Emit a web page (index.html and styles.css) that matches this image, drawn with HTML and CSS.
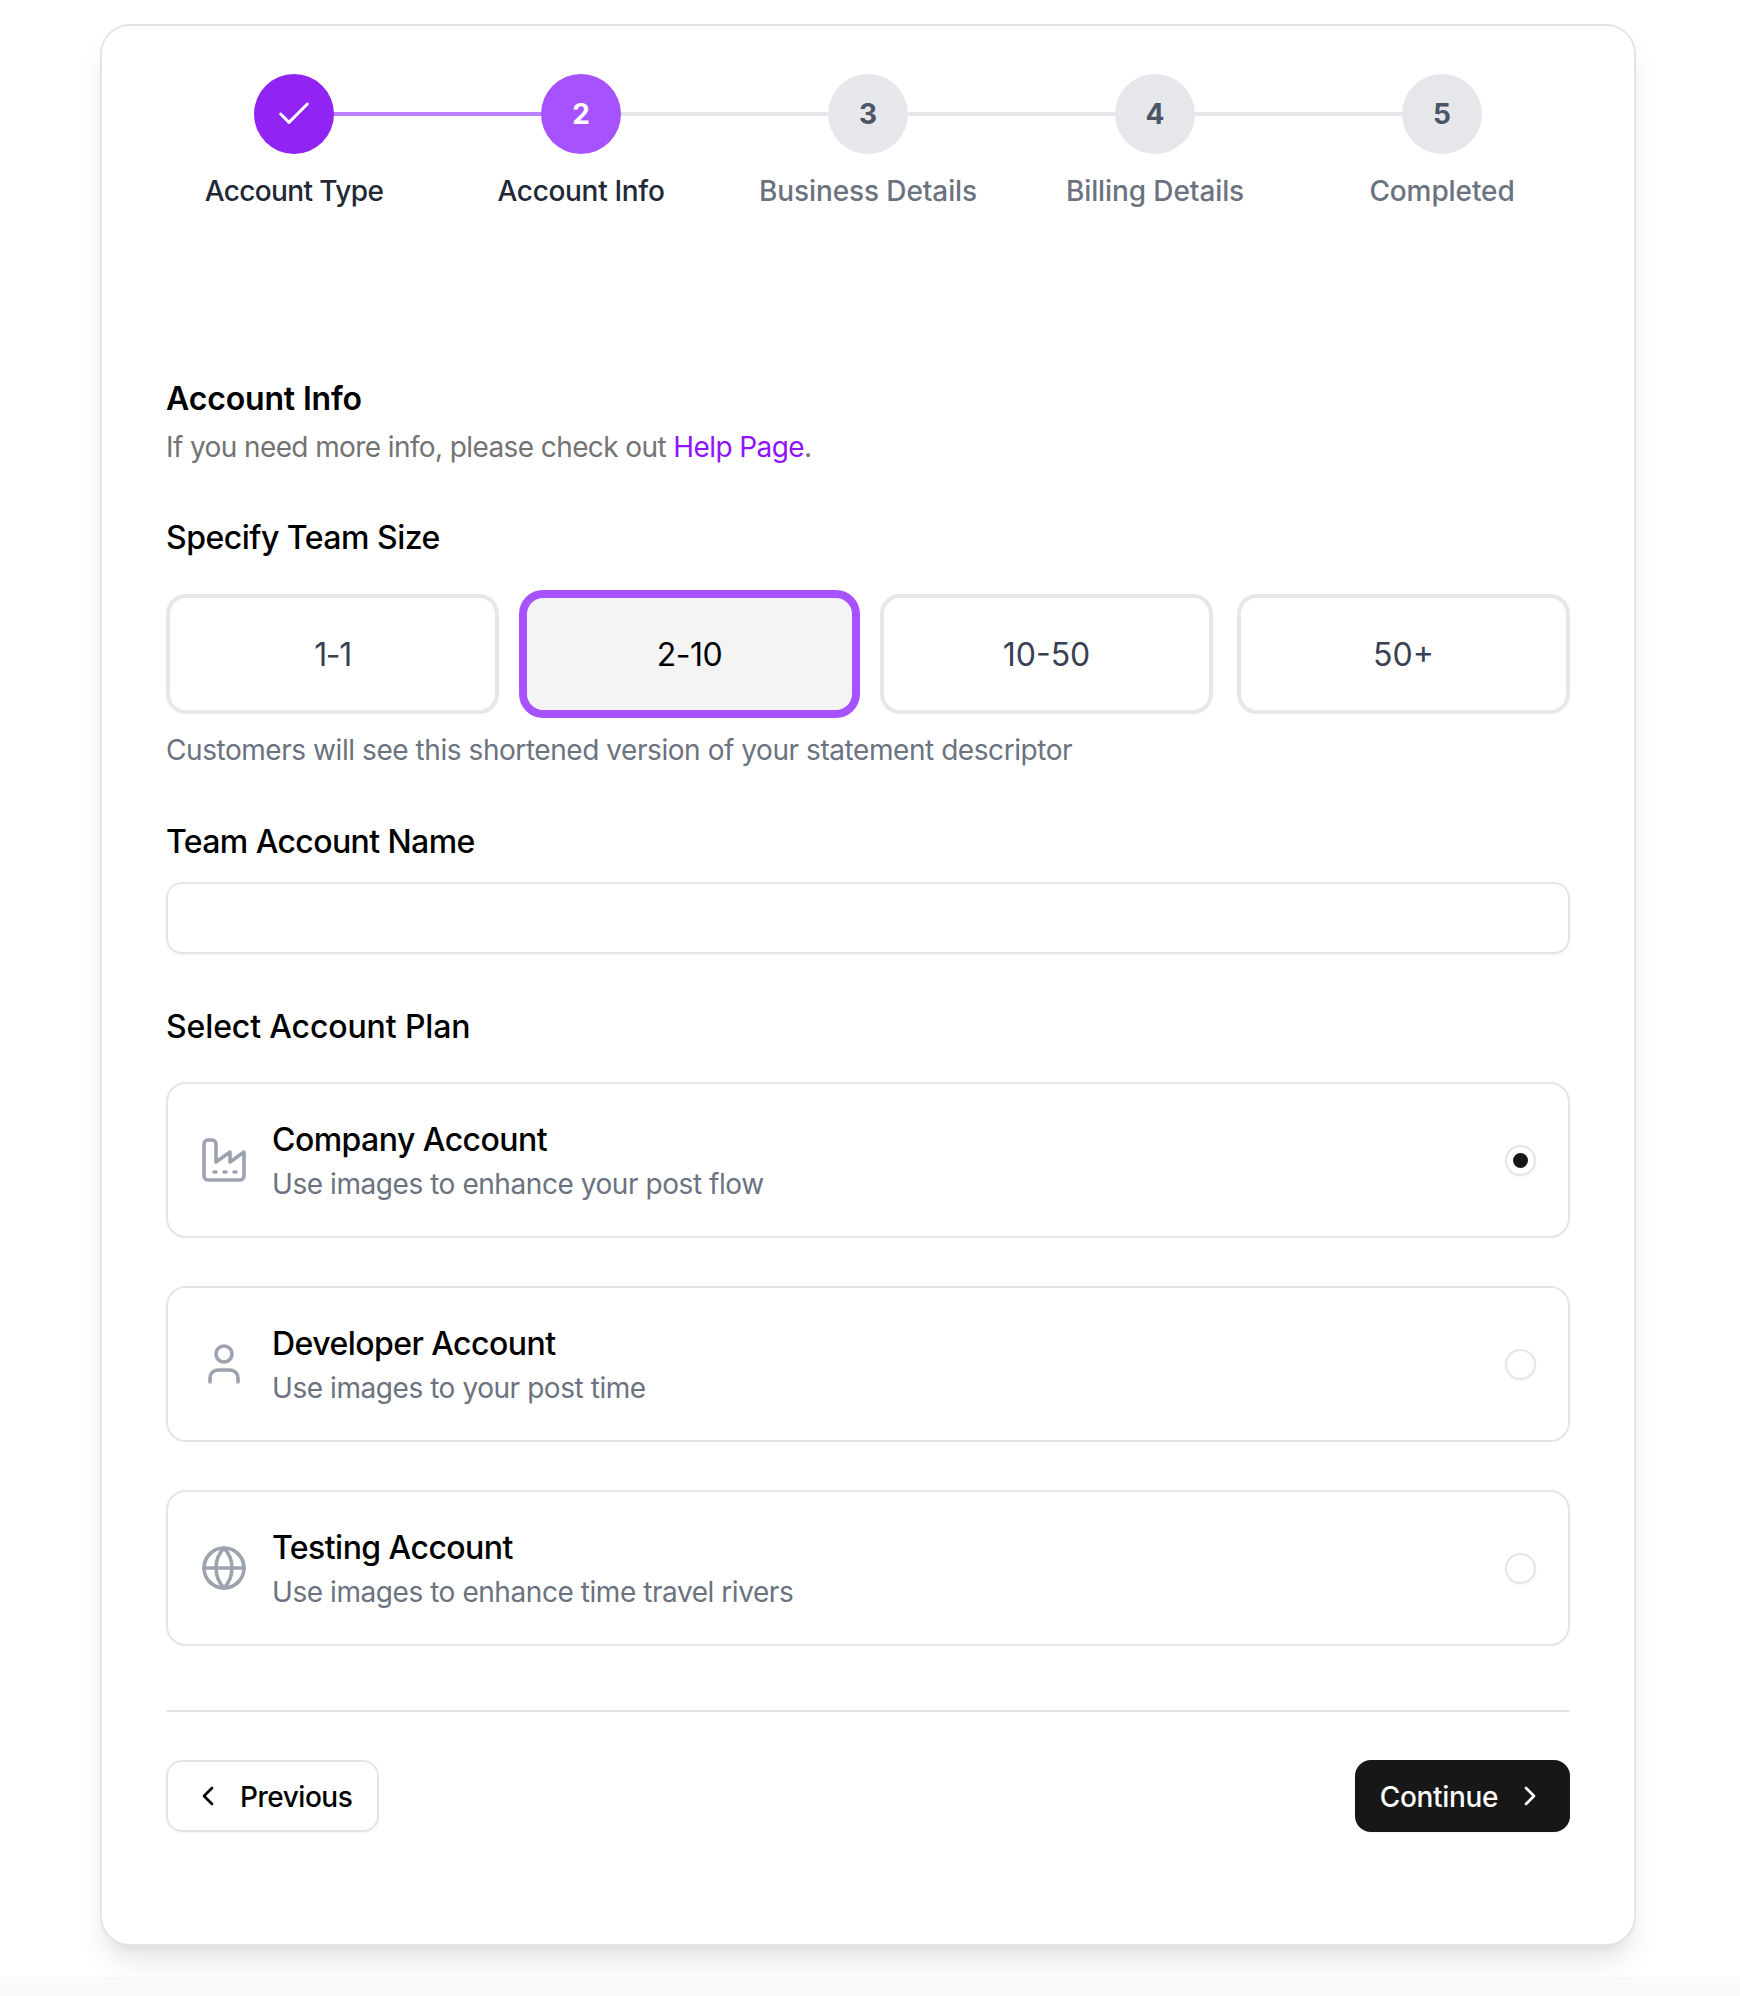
FILE: index.html
```html
<!DOCTYPE html>
<html lang="en">
<head>
<meta charset="utf-8">
<title>Account Info</title>
<link rel="stylesheet" href="styles.css">
</head>
<body>
<div class="page">
  <main class="panel">
    <ol class="stepper">
      <li class="step done">
        <span class="bubble"><svg class="icon-check" viewBox="0 0 24 24"><path d="M20 6 9 17l-5-5"/></svg></span>
        <span class="step-label">Account Type</span>
      </li>
      <li class="step current">
        <span class="bubble">2</span>
        <span class="step-label">Account Info</span>
      </li>
      <li class="step">
        <span class="bubble">3</span>
        <span class="step-label">Business Details</span>
      </li>
      <li class="step">
        <span class="bubble">4</span>
        <span class="step-label">Billing Details</span>
      </li>
      <li class="step">
        <span class="bubble">5</span>
        <span class="step-label">Completed</span>
      </li>
    </ol>

    <h1 class="title">Account Info</h1>
    <p class="subtitle">If you need more info, please check out <a class="link" href="#">Help Page</a>.</p>

    <h2 class="section-label label-team">Specify Team Size</h2>
    <div class="sizes">
      <div class="size size-tight">1-1</div>
      <div class="size selected">2-10</div>
      <div class="size">10-50</div>
      <div class="size">50+</div>
    </div>
    <p class="helper">Customers will see this shortened version of your statement descriptor</p>

    <h2 class="section-label label-name">Team Account Name</h2>
    <div class="input"></div>

    <h2 class="section-label label-plan">Select Account Plan</h2>
    <div class="plans">
      <div class="plan">
        <svg class="plan-icon" viewBox="0 0 24 24"><path d="M2 20a2 2 0 0 0 2 2h16a2 2 0 0 0 2-2V8l-7 5V8l-7 5V4a2 2 0 0 0-2-2H4a2 2 0 0 0-2 2Z"/><path d="M17 18h1"/><path d="M12 18h1"/><path d="M7 18h1"/></svg>
        <div class="plan-text">
          <div class="plan-name">Company Account</div>
          <div class="plan-desc">Use images to enhance your post flow</div>
        </div>
        <span class="radio checked"></span>
      </div>
      <div class="plan">
        <svg class="plan-icon" viewBox="0 0 24 24"><path d="M19 21v-2a4 4 0 0 0-4-4H9a4 4 0 0 0-4 4v2"/><circle cx="12" cy="7" r="4"/></svg>
        <div class="plan-text">
          <div class="plan-name">Developer Account</div>
          <div class="plan-desc">Use images to your post time</div>
        </div>
        <span class="radio"></span>
      </div>
      <div class="plan">
        <svg class="plan-icon" viewBox="0 0 24 24"><circle cx="12" cy="12" r="10"/><path d="M12 2a14.5 14.5 0 0 0 0 20 14.5 14.5 0 0 0 0-20"/><path d="M2 12h20"/></svg>
        <div class="plan-text">
          <div class="plan-name">Testing Account</div>
          <div class="plan-desc">Use images to enhance time travel rivers</div>
        </div>
        <span class="radio"></span>
      </div>
    </div>

    <div class="actions">
      <button class="btn btn-prev" type="button"><svg class="chev" viewBox="0 0 24 24"><path d="m15 18-6-6 6-6"/></svg><span class="btn-text">Previous</span></button>
      <button class="btn btn-next" type="button"><span class="btn-text">Continue</span><svg class="chev" viewBox="0 0 24 24"><path d="m9 18 6-6-6-6"/></svg></button>
    </div>
  </main>
</div>
</body>
</html>
```
FILE: styles.css
```css
* { box-sizing: border-box; }
html, body { margin: 0; padding: 0; }
body {
  background: #fafafa;
  font-family: Inter, "Liberation Sans", sans-serif;
  color: #0a0a0a;
  min-height: 1996px;
}
.page {
  background: #fff;
  height: 1977px;
  padding: 24px 104px 0 100px;
  overflow: hidden;
}
.panel {
  height: 1922px;
  background: #fff;
  border: 2px solid #e5e5e5;
  border-radius: 30px;
  padding: 48px 64px 0;
  box-shadow: 0 20px 30px -6px rgba(0,0,0,.1), 0 8px 12px -8px rgba(0,0,0,.1);
}
.stepper {
  list-style: none;
  margin: 0 -16px;
  padding: 0;
  display: grid;
  grid-template-columns: repeat(5, 287px);
  justify-content: center;
}
.step {
  position: relative;
  display: flex;
  flex-direction: column;
  align-items: center;
}
.step:not(:last-child)::after {
  content: "";
  position: absolute;
  left: 50%;
  width: 100%;
  top: 38px;
  height: 4px;
  background: #e5e7eb;
}
.step.done::after { background: #bd80ff; }
.bubble {
  position: relative;
  z-index: 1;
  width: 80px;
  height: 80px;
  border-radius: 50%;
  background: #e5e7eb;
  color: #4b5563;
  font-size: 28px;
  font-weight: 700;
  display: flex;
  align-items: center;
  justify-content: center;
}
.done .bubble { background: #9124f2; }
.current .bubble { background: #a652ff; color: #fff; }
.icon-check {
  width: 40px;
  height: 40px;
  fill: none;
  stroke: #fff;
  stroke-width: 1.8;
  stroke-linecap: round;
  stroke-linejoin: round;
}
.step-label {
  margin-top: 19px;
  font-size: 28px;
  line-height: 36px;
  font-weight: 500;
  color: #6b7280;
  white-space: nowrap;
  letter-spacing: -0.1px;
}
.done .step-label { color: #1f2937; letter-spacing: -0.6px; }
.current .step-label { color: #1f2937; letter-spacing: -0.32px; }

.title {
  margin: 170px 0 0;
  font-size: 32px;
  line-height: 40px;
  font-weight: 600;
  letter-spacing: -0.15px;
  color: #000;
}
.subtitle {
  margin: 10px 0 0;
  font-size: 28px;
  line-height: 36px;
  color: #737373;
  letter-spacing: -0.6px;
}
.link { color: #9013fe; text-decoration: none; }
.section-label {
  font-size: 32px;
  line-height: 40px;
  font-weight: 500;
  color: #000;
}
.label-team { margin: 53px 0 36px; letter-spacing: -0.5px; }
.label-name { margin: 54px 0 20px; letter-spacing: -0.6px; }
.label-plan { margin: 53px 0 35px; letter-spacing: -0.13px; }

.sizes {
  display: grid;
  grid-template-columns: repeat(4, 1fr);
  gap: 24px;
}
.size {
  height: 120px;
  border: 4px solid #e5e7eb;
  border-radius: 20px;
  display: flex;
  align-items: center;
  justify-content: center;
  font-size: 32px;
  color: #374151;
}
.size-tight { letter-spacing: -1.4px; }
.size.selected {
  background: #f4f4f4;
  border-color: #a652ff;
  box-shadow: 0 0 0 4px #a652ff;
  color: #000;
  letter-spacing: -0.5px;
}
.helper {
  margin: 18px 0 0;
  font-size: 28px;
  line-height: 36px;
  color: #6b7280;
  letter-spacing: -0.44px;
}
.input {
  height: 72px;
  border: 2px solid #e5e5e5;
  border-radius: 16px;
  box-shadow: 0 1px 2px rgba(0,0,0,.05);
}
.plans {
  display: flex;
  flex-direction: column;
  gap: 48px;
}
.plan {
  height: 156px;
  border: 2px solid #e5e5e5;
  border-radius: 20px;
  padding: 0 32px;
  display: flex;
  align-items: center;
  gap: 24px;
}
.plan-icon {
  width: 48px;
  height: 48px;
  flex: none;
  fill: none;
  stroke: #9ca3af;
  stroke-width: 1.8;
  stroke-linecap: round;
  stroke-linejoin: round;
}
.plan-text { flex: 1; padding-top: 2px; }
.plan-name {
  font-size: 32px;
  line-height: 40px;
  font-weight: 500;
  letter-spacing: -0.55px;
  color: #000;
}
.plan-desc {
  margin-top: 6px;
  font-size: 28px;
  line-height: 36px;
  color: #6b7280;
  letter-spacing: -0.44px;
}
.radio {
  width: 31px;
  height: 31px;
  flex: none;
  border: 2px solid #e5e5e5;
  border-radius: 50%;
  background: #fff;
  box-shadow: 0 1px 2px rgba(0,0,0,.05);
  display: flex;
  align-items: center;
  justify-content: center;
}
.radio.checked::before {
  content: "";
  width: 15px;
  height: 15px;
  border-radius: 50%;
  background: #171717;
}
.actions {
  margin-top: 64px;
  padding-top: 48px;
  border-top: 2px solid #e5e5e5;
  display: flex;
  justify-content: space-between;
  align-items: center;
}
.btn {
  font-family: inherit;
  font-size: 28px;
  font-weight: 500;
  height: 72px;
  border-radius: 16px;
  display: flex;
  align-items: center;
  gap: 16px;
  box-shadow: 0 1px 2px rgba(0,0,0,.05);
}
.btn-text { padding-top: 2px; }
.btn-prev {
  background: #fff;
  border: 2px solid #e5e5e5;
  color: #000;
  padding: 0 25px 0 24px;
  letter-spacing: -0.48px;
}
.btn-next {
  background: #171717;
  border: 0;
  color: #fafafa;
  padding: 0 24px 0 25px;
  letter-spacing: -0.35px;
}
.chev {
  width: 32px;
  height: 32px;
  fill: none;
  stroke: currentColor;
  stroke-width: 2;
  stroke-linecap: round;
  stroke-linejoin: round;
}
```
